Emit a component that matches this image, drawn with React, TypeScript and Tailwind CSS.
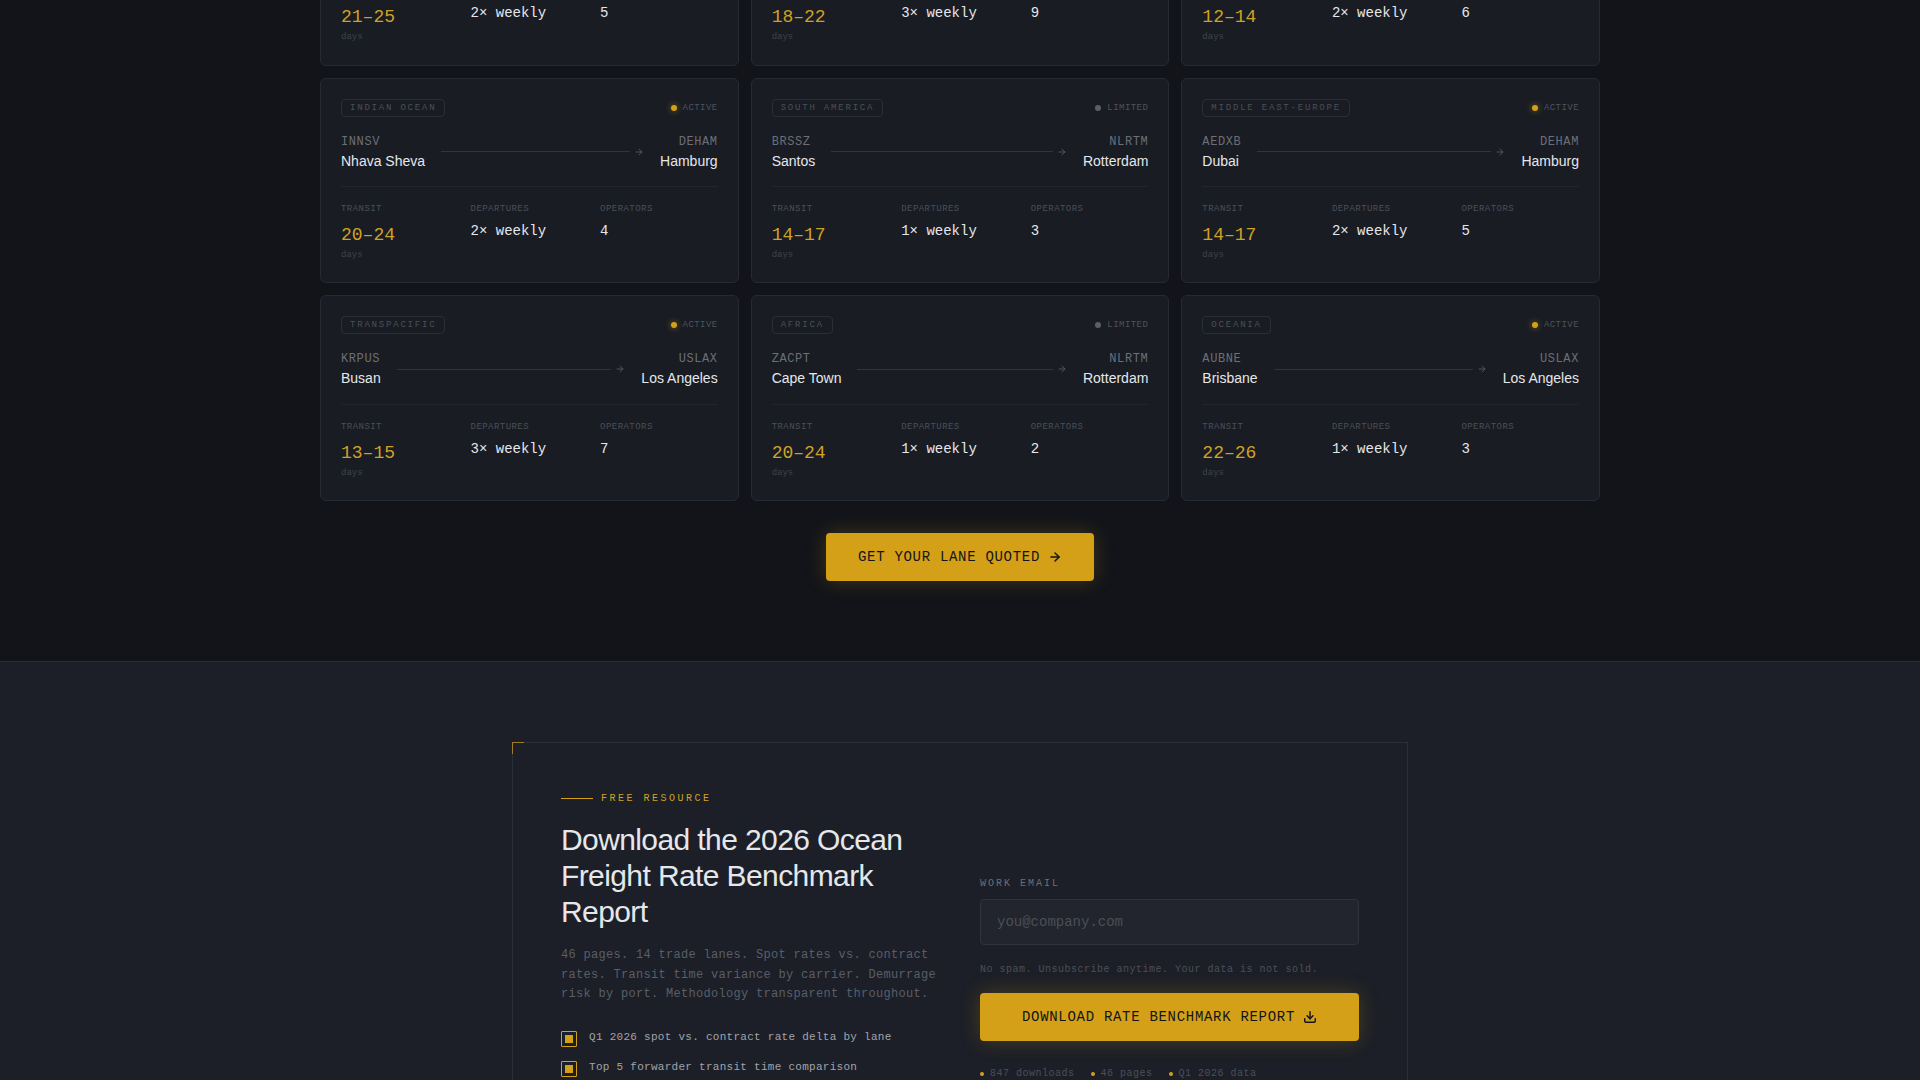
import React from 'react'
import { ArrowRight, Download } from 'lucide-react'

interface Lane {
  region: string
  status: 'ACTIVE' | 'LIMITED'
  fromCode: string
  from: string
  toCode: string
  to: string
  transit: string
  departures: string
  operators: number
}

const LANES: Lane[] = [
  { region: 'TRANSATLANTIC', status: 'ACTIVE', fromCode: 'DEHAM', from: 'Hamburg', toCode: 'USNYC', to: 'New York', transit: '21–25', departures: '2× weekly', operators: 5 },
  { region: 'ASIA-EUROPE', status: 'ACTIVE', fromCode: 'CNSHA', from: 'Shanghai', toCode: 'NLRTM', to: 'Rotterdam', transit: '18–22', departures: '3× weekly', operators: 9 },
  { region: 'INTRA-ASIA', status: 'ACTIVE', fromCode: 'SGSIN', from: 'Singapore', toCode: 'CNSHA', to: 'Shanghai', transit: '12–14', departures: '2× weekly', operators: 6 },
  { region: 'INDIAN OCEAN', status: 'ACTIVE', fromCode: 'INNSV', from: 'Nhava Sheva', toCode: 'DEHAM', to: 'Hamburg', transit: '20–24', departures: '2× weekly', operators: 4 },
  { region: 'SOUTH AMERICA', status: 'LIMITED', fromCode: 'BRSSZ', from: 'Santos', toCode: 'NLRTM', to: 'Rotterdam', transit: '14–17', departures: '1× weekly', operators: 3 },
  { region: 'MIDDLE EAST-EUROPE', status: 'ACTIVE', fromCode: 'AEDXB', from: 'Dubai', toCode: 'DEHAM', to: 'Hamburg', transit: '14–17', departures: '2× weekly', operators: 5 },
  { region: 'TRANSPACIFIC', status: 'ACTIVE', fromCode: 'KRPUS', from: 'Busan', toCode: 'USLAX', to: 'Los Angeles', transit: '13–15', departures: '3× weekly', operators: 7 },
  { region: 'AFRICA', status: 'LIMITED', fromCode: 'ZACPT', from: 'Cape Town', toCode: 'NLRTM', to: 'Rotterdam', transit: '20–24', departures: '1× weekly', operators: 2 },
  { region: 'OCEANIA', status: 'ACTIVE', fromCode: 'AUBNE', from: 'Brisbane', toCode: 'USLAX', to: 'Los Angeles', transit: '22–26', departures: '1× weekly', operators: 3 },
]

const BULLETS = [
  'Q1 2026 spot vs. contract rate delta by lane',
  'Top 5 forwarder transit time comparison',
  'Port demurrage risk scores by region',
  'Carrier reliability index by trade lane',
  'Contract negotiation benchmarks',
]

const MONO = "font-['Liberation_Mono',monospace]"
const SANS = "font-['Liberation_Sans',sans-serif]"

function LaneCard({ lane }: { lane: Lane }) {
  return (
    <div className="h-[205.75px] rounded-md border border-[#262a32] bg-[#191c23] p-5">
      <div className="flex items-center justify-between">
        <span className="rounded-sm border border-[#2a2e36] px-2 py-[2px] font-['Liberation_Mono',monospace] text-[9px] leading-[12px] tracking-[0.2em] text-[#4b4f58]">
          {lane.region}
        </span>
        <span className="flex items-center gap-[6px]">
          {lane.status === 'ACTIVE' ? (
            <span className="h-[6px] w-[6px] rounded-full bg-[#d4a017] shadow-[0_0_6px_rgba(212,160,23,0.6)]" />
          ) : (
            <span className="h-[6px] w-[6px] rounded-full bg-[#5a5e67]" />
          )}
          <span className="font-['Liberation_Mono',monospace] text-[9px] leading-[12px] tracking-[0.05em] text-[#4f535c]">{lane.status}</span>
        </span>
      </div>

      <div className="mt-[16px] flex items-center gap-4 border-b border-[#22252d] pb-[15.5px]">
        <div>
          <div className="font-['Liberation_Mono',monospace] text-xs leading-[18px] tracking-[0.05em] text-[#6b6f78]">{lane.fromCode}</div>
          <div className="font-['Liberation_Sans',sans-serif] text-sm leading-[20px] text-[#e5e7eb]">{lane.from}</div>
        </div>
        <div className="flex flex-1 items-center gap-[4px]">
          <div className="h-px flex-1 bg-[#30343c]" />
          <ArrowRight size={10} strokeWidth={2} className="text-[#5a5e67]" />
        </div>
        <div className="text-right">
          <div className="font-['Liberation_Mono',monospace] text-xs leading-[18px] tracking-[0.05em] text-[#6b6f78]">{lane.toCode}</div>
          <div className="font-['Liberation_Sans',sans-serif] text-sm leading-[20px] text-[#e5e7eb]">{lane.to}</div>
        </div>
      </div>

      <div className="mt-[16px] grid grid-cols-3 gap-3">
        <div>
          <div className="font-['Liberation_Mono',monospace] text-[9px] leading-[12px] tracking-[0.05em] text-[#4b4f58]">TRANSIT</div>
          <div className="mt-[6px] font-['Liberation_Mono',monospace] text-lg leading-[28px] text-[#cfa225]">{lane.transit}</div>
          <div className="font-['Liberation_Mono',monospace] text-[9px] leading-[12px] text-[#3f434c]">days</div>
        </div>
        <div>
          <div className="font-['Liberation_Mono',monospace] text-[9px] leading-[12px] tracking-[0.05em] text-[#4b4f58]">DEPARTURES</div>
          <div className="mt-[6px] font-['Liberation_Mono',monospace] text-sm leading-[20px] text-[#e5e7eb]">{lane.departures}</div>
        </div>
        <div>
          <div className="font-['Liberation_Mono',monospace] text-[9px] leading-[12px] tracking-[0.05em] text-[#4b4f58]">OPERATORS</div>
          <div className="mt-[6px] font-['Liberation_Mono',monospace] text-sm leading-[20px] text-[#e5e7eb]">{lane.operators}</div>
        </div>
      </div>
    </div>
  )
}

export default function App() {
  return (
    <div className="h-[1080px] overflow-hidden bg-[#12141a]">
      <section className="-mt-[140.25px] px-[320px] pb-[80px]">
        <div className="grid grid-cols-3 gap-3">
          {LANES.map(lane => (
            <LaneCard key={lane.fromCode + lane.toCode} lane={lane} />
          ))}
        </div>
        <div className="mt-8 flex justify-center">
          <button className="flex h-12 items-center gap-2 rounded-sm bg-[#d4a017] px-8 font-['Liberation_Mono',monospace] text-sm tracking-[0.05em] text-[#12141a] shadow-[0_0_20px_rgba(212,160,23,0.25)]">
            GET YOUR LANE QUOTED
            <ArrowRight size={14} strokeWidth={2.5} />
          </button>
        </div>
      </section>

      <section className="border-t border-[#2a2e36] bg-[#1c1f27] pt-20">
        <div className="relative mx-auto w-[896px] border border-[#2a2e36] p-12">
          <span className="absolute -left-px -top-px h-3 w-3 border-l border-t border-[#d4a017]/70" />
          <div className="grid grid-cols-2 items-center gap-10">
            <div>
              <div className="flex items-center gap-2">
                <span className="h-px w-8 bg-[#d4a017]" />
                <span className={`${MONO} text-[10px] tracking-[0.25em] text-[#cfa225]`}>FREE RESOURCE</span>
              </div>
              <h2 className={`${SANS} mt-4 text-3xl font-normal leading-[36px] tracking-[-0.02em] text-[#e5e7eb]`}>
                Download the 2026 Ocean Freight Rate Benchmark Report
              </h2>
              <p className={`${MONO} mt-4 text-xs leading-[19.5px] tracking-[0.025em] text-[#5a5e67]`}>
                46 pages. 14 trade lanes. Spot rates vs. contract rates. Transit time variance by carrier. Demurrage risk by port. Methodology transparent throughout.
              </p>
              <ul className="mt-6 flex flex-col gap-3">
                {BULLETS.map(item => (
                  <li key={item} className="flex gap-3">
                    <span className="mt-[2px] flex h-4 w-4 shrink-0 items-center justify-center rounded-[1px] border border-[#d4a017]">
                      <span className="h-2 w-2 bg-[#d4a017]" />
                    </span>
                    <span className={`${MONO} text-[11px] leading-[16px] tracking-[0.025em] text-[#a0a4ab]`}>{item}</span>
                  </li>
                ))}
              </ul>
            </div>

            <div>
              <label className={`${MONO} block text-[10px] leading-[15px] tracking-[0.2em] text-[#6b6f78]`}>WORK EMAIL</label>
              <input
                readOnly
                placeholder="you@company.com"
                className={`${MONO} mt-[8px] h-[46px] w-full rounded-sm border border-[#2f333b] bg-[#22252d] px-4 text-sm outline-none placeholder:text-[#4b4f58]`}
              />
              <p className={`${MONO} mt-[17px] text-[10px] leading-[15px] tracking-[0.05em] text-[#4b4f58]`}>
                No spam. Unsubscribe anytime. Your data is not sold.
              </p>
              <button className={`${MONO} mt-[16px] flex h-12 w-full items-center justify-center gap-2 rounded-sm bg-[#d4a017] text-sm tracking-[0.05em] text-[#12141a] shadow-[0_0_20px_rgba(212,160,23,0.25)]`}>
                DOWNLOAD RATE BENCHMARK REPORT
                <Download size={14} strokeWidth={2.5} />
              </button>
              <div className="mt-[25px] flex items-center gap-4">
                {['847 downloads', '46 pages', 'Q1 2026 data'].map(item => (
                  <span key={item} className="flex items-center gap-[6px]">
                    <span className="h-1 w-1 rounded-full bg-[#d4a017]" />
                    <span className={`${MONO} text-[10px] leading-[15px] tracking-[0.05em] text-[#4b4f58]`}>{item}</span>
                  </span>
                ))}
              </div>
            </div>
          </div>
        </div>
      </section>
    </div>
  )
}
